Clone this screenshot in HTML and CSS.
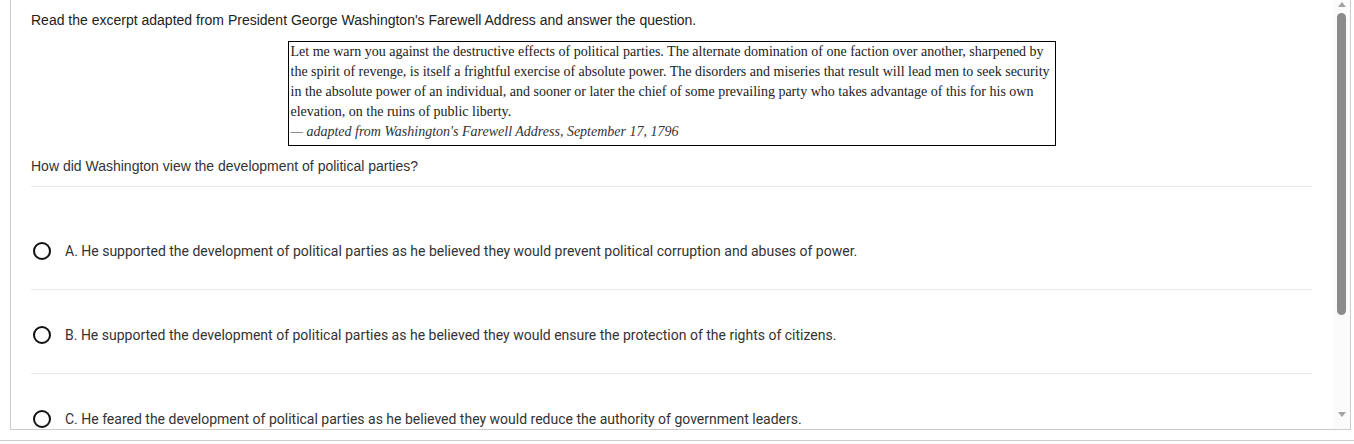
FILE: index.html
```html
<!DOCTYPE html>
<html>
<head>
  <title>Question</title>
  <link rel="stylesheet" href="styles.css">
</head>
<body>
  <div class="frame">
    <div class="content">
      <p class="intro">Read the excerpt adapted from President George Washington's Farewell Address and answer the question.</p>
      <div class="excerpt">
        Let me warn you against the destructive effects of political parties. The alternate domination of one faction over another, sharpened by<br>
        the spirit of revenge, is itself a frightful exercise of absolute power. The disorders and miseries that result will lead men to seek security<br>
        in the absolute power of an individual, and sooner or later the chief of some prevailing party who takes advantage of this for his own<br>
        elevation, on the ruins of public liberty.<br>
        <span class="source">— adapted from Washington's Farewell Address, September 17, 1796</span>
      </div>
      <p class="question">How did Washington view the development of political parties?</p>
      <ul class="options">
        <li class="option"><span class="radio"></span>A. He supported the development of political parties as he believed they would prevent political corruption and abuses of power.</li>
        <li class="option"><span class="radio"></span>B. He supported the development of political parties as he believed they would ensure the protection of the rights of citizens.</li>
        <li class="option"><span class="radio"></span>C. He feared the development of political parties as he believed they would reduce the authority of government leaders.</li>
      </ul>
    </div>
    <div class="scrollbar">
      <span class="arrow up"></span>
      <div class="track"><div class="thumb"></div></div>
      <span class="arrow down"></span>
    </div>
  </div>
  <div class="page-bottom"></div>
</body>
</html>
```

FILE: styles.css
```css
body {
  margin: 0;
  background: #fff;
  font-family: "Liberation Sans", Arial, sans-serif;
  color: #222;
}

.frame {
  display: flex;
  margin-left: 10px;
  width: 1341px;
  height: 430px;
  box-sizing: border-box;
  border: 1px solid #cdcdcd;
  border-top: none;
  overflow: hidden;
}

.content {
  flex: 1;
  padding: 12px 21px 0 20px;
  overflow: hidden;
}

.intro {
  margin: 0;
  font-size: 14px;
  line-height: 16px;
}

.excerpt {
  width: 768px;
  box-sizing: border-box;
  margin: 13px auto 0;
  padding: 0 2px 3px;
  border: 1px solid #000;
  font-family: "Liberation Serif", "Times New Roman", serif;
  font-size: 14px;
  line-height: 20px;
  color: #222;
  white-space: nowrap;
}

.source {
  font-style: italic;
  color: #333;
}

.question {
  margin: 12px 0 0;
  padding-bottom: 12px;
  font-size: 14px;
  line-height: 16px;
  color: #333;
  border-bottom: 1px solid #e9e9e9;
}

.options {
  list-style: none;
  margin: 19px 0 0;
  padding: 0;
}

.option {
  display: flex;
  align-items: center;
  padding: 36px 0 29px;
  border-bottom: 1px solid #e9e9e9;
  font-family: Roboto, sans-serif;
  font-size: 14px;
  line-height: 18px;
  color: #333;
}

.radio {
  width: 18px;
  height: 18px;
  box-sizing: border-box;
  border: 2px solid #111;
  border-radius: 50%;
  margin: 0 14px 0 2px;
  flex: none;
}

.scrollbar {
  width: 17px;
  flex: none;
  display: flex;
  flex-direction: column;
  align-items: center;
  background: #fbfbfb;
}

.arrow {
  width: 0;
  height: 0;
  border-left: 4px solid transparent;
  border-right: 4px solid transparent;
}

.arrow.up {
  margin-top: 2px;
  border-bottom: 5px solid #a3a3a3;
}

.arrow.down {
  margin-bottom: 12px;
  border-top: 5px solid #a3a3a3;
}

.track {
  flex: 1;
  width: 100%;
  display: flex;
  justify-content: center;
  padding-top: 6px;
}

.thumb {
  width: 9px;
  height: 302px;
  border-radius: 5px;
  background: #8b8b8b;
}

.page-bottom {
  margin-top: 10px;
  border-top: 1px solid #cdcdcd;
}
```
